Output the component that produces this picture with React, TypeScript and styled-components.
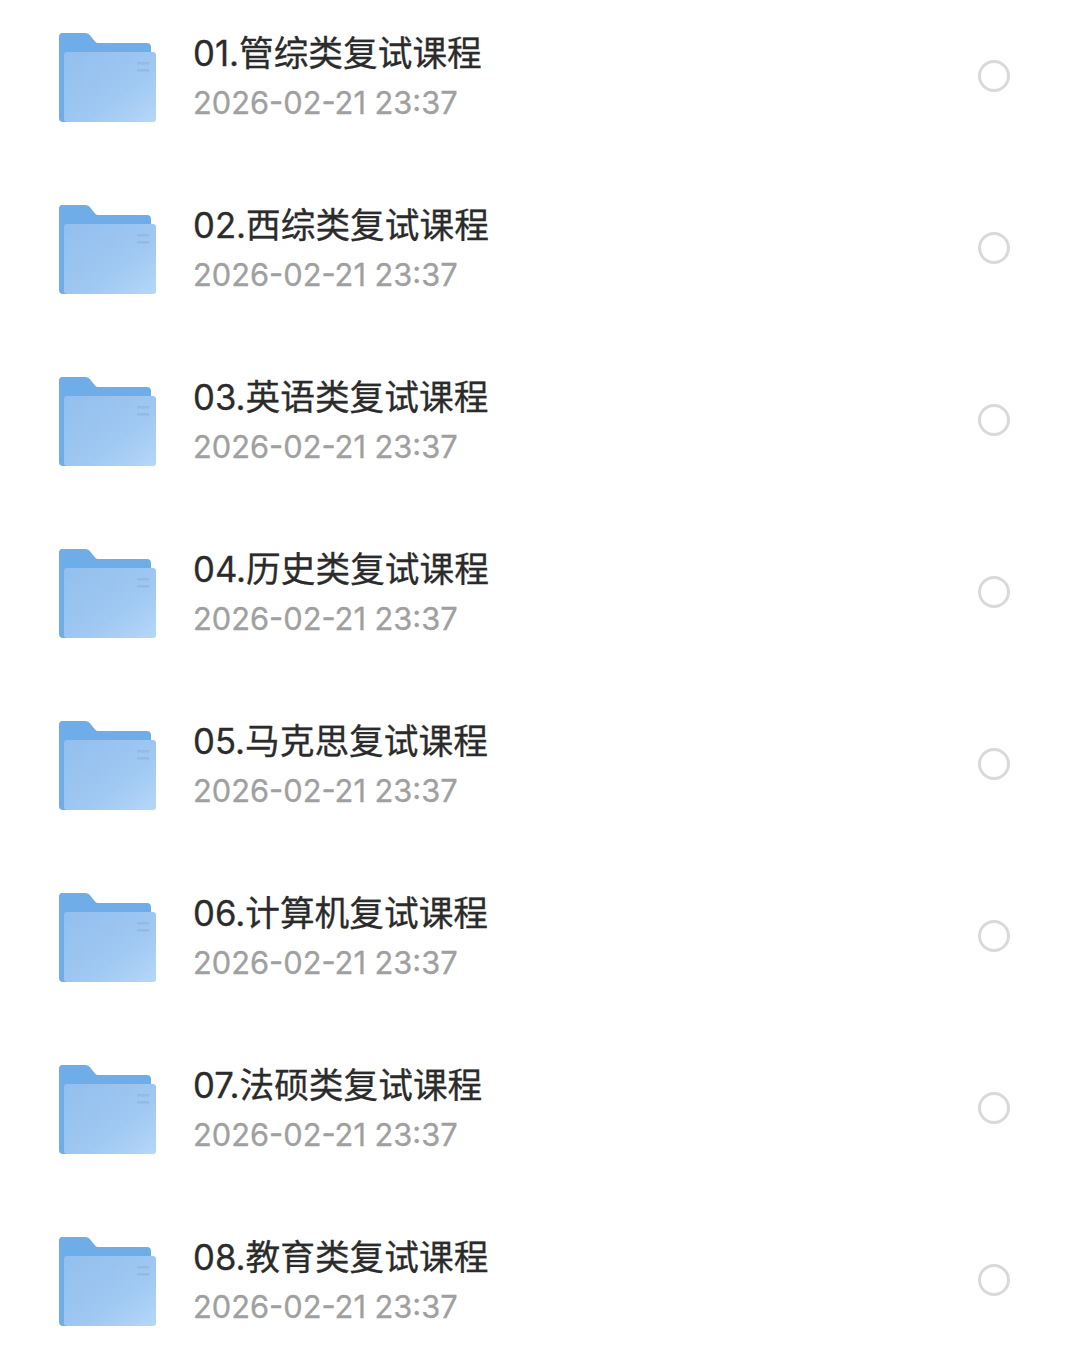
import { createGlobalStyle, styled } from 'styled-components';

const GlobalStyle = createGlobalStyle`
    html, body {
        margin: 0;
        padding: 0;
        background: #fff;
    }
    body {
        font-family: 'Inter', 'Noto Sans CJK SC', sans-serif;
    }
`;

const folders = [
    '01.管综类复试课程',
    '02.西综类复试课程',
    '03.英语类复试课程',
    '04.历史类复试课程',
    '05.马克思复试课程',
    '06.计算机复试课程',
    '07.法硕类复试课程',
    '08.教育类复试课程',
];

const FolderIcon = ({ id }: { id: number }) => (
    <FolderSvg viewBox="0 0 97 89" width="97" height="89">
        <defs>
            <linearGradient id={`front${id}`} x1="0" y1="0" x2="1" y2="1">
                <stop offset="0" stopColor="#93bfee" />
                <stop offset="0.6" stopColor="#9fc8f2" />
                <stop offset="1" stopColor="#b6d7f9" />
            </linearGradient>
        </defs>
        <path
            d="M3 0H26C29 0 30.5 1.5 32 3.5L36 8.5C37 9.5 38 10 40 10H88C90.500 10 92 11.500 92 14V20H10V89H4C1.500 89 0 87.500 0 85V3C0 1.500 1.500 0 3 0Z"
            fill="#6fade9"
        />
        <rect x="5" y="19" width="92" height="70" rx="3" fill={`url(#front${id})`} />
        <rect x="78" y="29" width="12" height="2.500" fill="#8fb3d9" opacity="0.6" />
        <rect x="78" y="36" width="12" height="2.500" fill="#8fb3d9" opacity="0.6" />
    </FolderSvg>
);

const App = () => {
    return (
        <>
            <GlobalStyle />
            <Page>
                {folders.map((name, i) => (
                    <Row key={name}>
                        <FolderIcon id={i} />
                        <Info>
                            <Title>{name}</Title>
                            <DateText>2026-02-21 23:37</DateText>
                        </Info>
                        <Radio />
                    </Row>
                ))}
            </Page>
        </>
    );
};

const Page = styled.div`
    width: 1080px;
    height: 1347px;
    overflow: hidden;
    display: flex;
    flex-direction: column;
    gap: 20px;
`;

const Row = styled.div`
    height: 152px;
    flex: none;
    display: flex;
    align-items: center;
    padding: 0 70px 0 59px;
`;

const FolderSvg = styled.svg`
    flex: none;
    display: block;
    margin: 2px 37px 0 0;
    filter: blur(0.5px);
`;

const Info = styled.div`
    flex: 1;
    display: flex;
    flex-direction: column;
    gap: 9px;
    padding-top: 3px;
`;

const Title = styled.div`
    font-size: 34.7px;
    line-height: 42px;
    color: #2b2b2b;
    -webkit-text-stroke: 0.3px #2b2b2b;
`;

const DateText = styled.div`
    font-size: 30.8px;
    line-height: 40px;
    color: #a0a0a0;
    -webkit-text-stroke: 0.3px #a0a0a0;
`;

const Radio = styled.div`
    width: 32px;
    height: 32px;
    box-sizing: border-box;
    border: 3px solid #d9d9d9;
    border-radius: 50%;
    flex: none;
`;

export default App;
